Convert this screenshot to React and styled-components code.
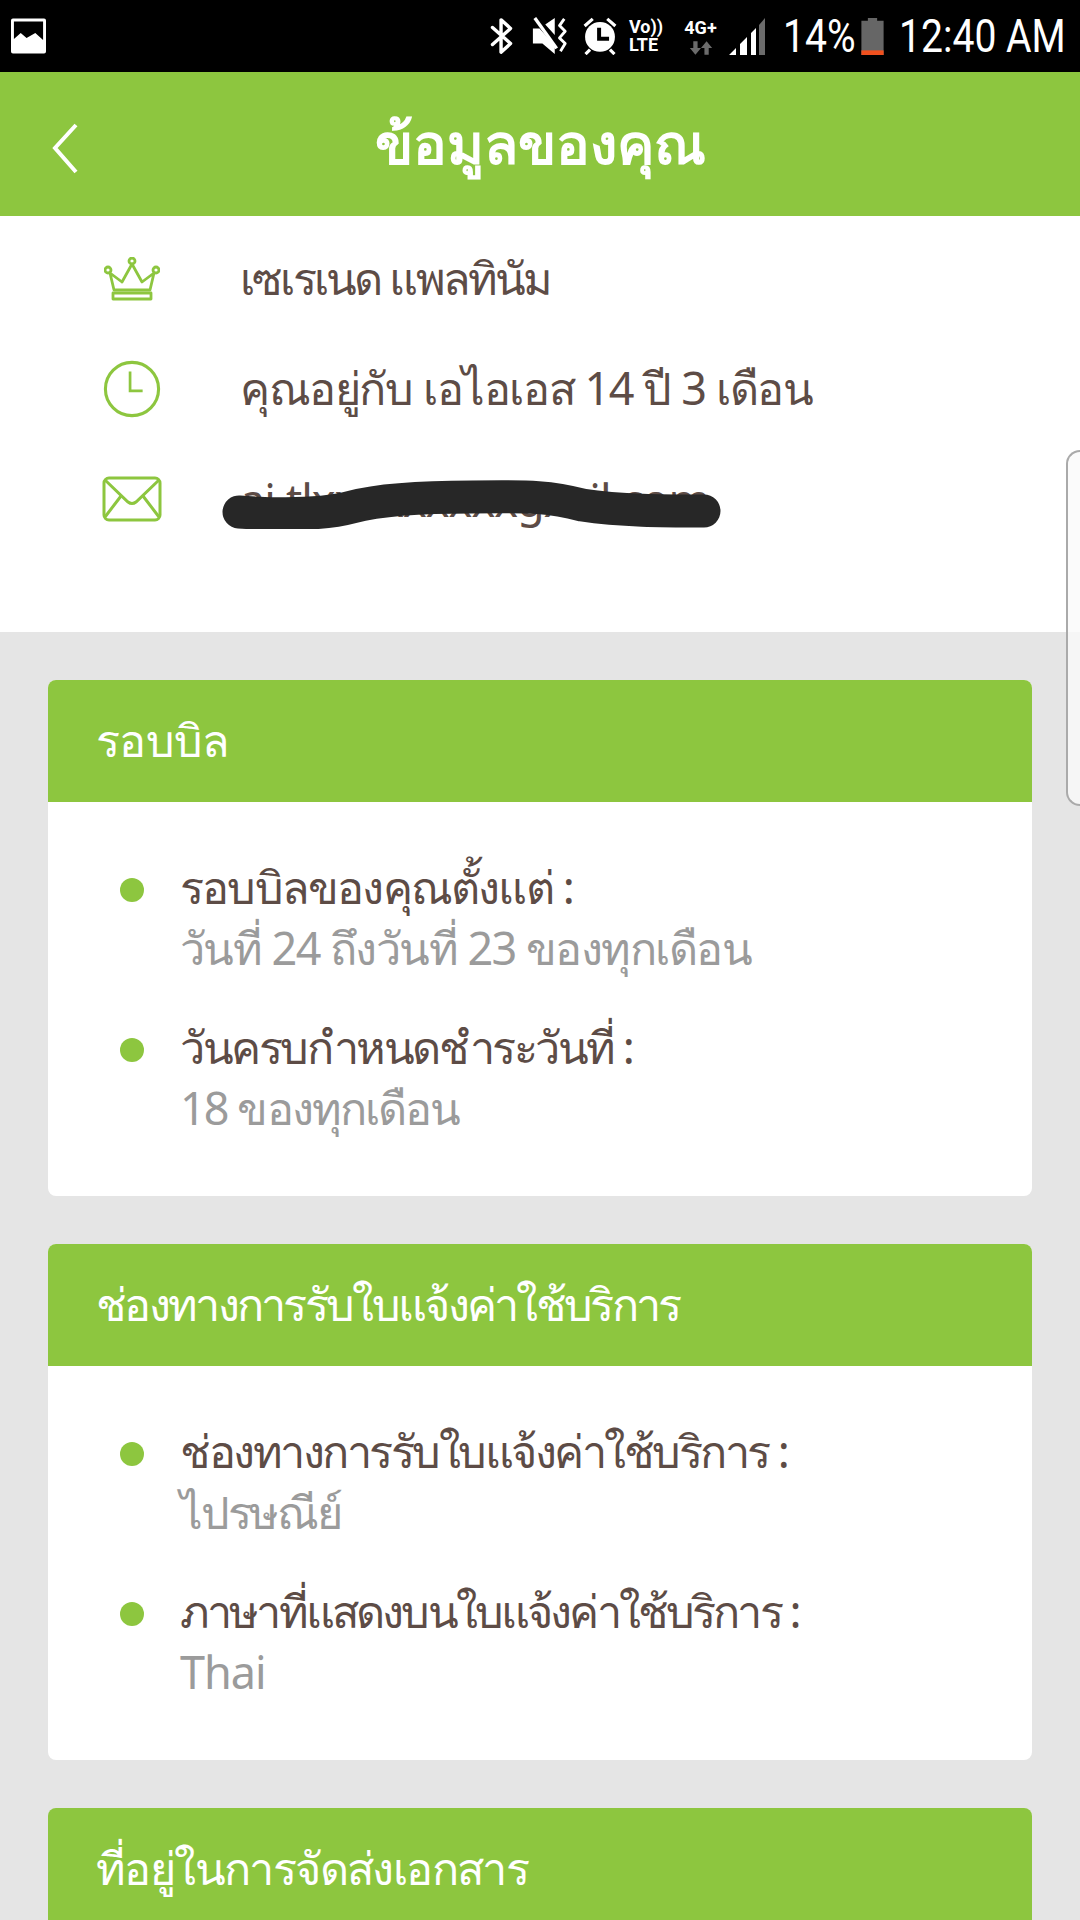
import React from "react";
import styled, { createGlobalStyle } from "styled-components";

const GREEN = "#8dc63f";
const BROWN = "#5d4c46";

// track = letter spacing per string, the font here is wider than the one in the app
const sections = [
  {
    title: "รอบบิล",
    track: -0.7,
    items: [
      { label: "รอบบิลของคุณตั้งแต่ :", labelTrack: -1.8, value: "วันที่ 24 ถึงวันที่ 23 ของทุกเดือน", valueTrack: -1.55 },
      { label: "วันครบกำหนดชำระวันที่ :", labelTrack: -2.5, value: "18 ของทุกเดือน", valueTrack: -1.9 },
    ],
  },
  {
    title: "ช่องทางการรับใบแจ้งค่าใช้บริการ",
    track: -2.7,
    items: [
      { label: "ช่องทางการรับใบแจ้งค่าใช้บริการ :", labelTrack: -2.5, value: "ไปรษณีย์", valueTrack: -2.2 },
      { label: "ภาษาที่แสดงบนใบแจ้งค่าใช้บริการ :", labelTrack: -2.85, value: "Thai", valueTrack: -1 },
    ],
  },
];

const App = () => {
  return (
    <Page>
      <GlobalStyle />
      <StatusBar>
        <GalleryIcon />
        <StatusRight>
          <StatusSlot>
            <BluetoothIcon />
          </StatusSlot>
          <StatusSlot $left={16}>
            <MuteIcon />
          </StatusSlot>
          <StatusSlot $left={13}>
            <AlarmIcon />
          </StatusSlot>
          <VolteIcon>
            <span>Vo))</span>
            <span>LTE</span>
          </VolteIcon>
          <NetworkIcon>
            <span>4G+</span>
            <ArrowsIcon />
          </NetworkIcon>
          <StatusSlot $left={10}>
            <SignalIcon />
          </StatusSlot>
          <StatusText $left={18} $width={68}>14%</StatusText>
          <StatusSlot $left={10}>
            <BatteryIcon />
          </StatusSlot>
          <StatusText $left={15} $width={164}>12:40 AM</StatusText>
        </StatusRight>
      </StatusBar>

      <Header>
        <BackButton>
          <svg width="30" height="56" viewBox="0 0 30 56" fill="none">
            <path d="M26 5 L5 28 L26 52" stroke="white" strokeWidth="4" />
          </svg>
        </BackButton>
        <Title>ข้อมูลของคุณ</Title>
      </Header>

      <Profile>
        <ProfileRow>
          <IconSlot>
            <CrownIcon />
          </IconSlot>
          <ProfileText $track={-2.8}>เซเรเนด แพลทินัม</ProfileText>
        </ProfileRow>
        <ProfileRow>
          <IconSlot>
            <ClockIcon />
          </IconSlot>
          <ProfileText $track={-1.4}>คุณอยู่กับ เอไอเอส 14 ปี 3 เดือน</ProfileText>
        </ProfileRow>
        <ProfileRow>
          <IconSlot>
            <MailIcon />
          </IconSlot>
          <EmailWrap>
            <ProfileText $track={-1}>ai.tlxxxxxxxxxgxxil.com</ProfileText>
            <Scribble />
          </EmailWrap>
        </ProfileRow>
      </Profile>

      <Content>
        {sections.map((section) => (
          <Card key={section.title}>
            <CardHeader $track={section.track}>{section.title}</CardHeader>
            <CardBody>
              {section.items.map((item) => (
                <Item key={item.label}>
                  <Dot />
                  <div>
                    <ItemLabel $track={item.labelTrack}>{item.label}</ItemLabel>
                    <ItemValue $track={item.valueTrack}>{item.value}</ItemValue>
                  </div>
                </Item>
              ))}
            </CardBody>
          </Card>
        ))}
        <Card>
          <CardHeader $track={-1.6}>ที่อยู่ในการจัดส่งเอกสาร</CardHeader>
        </Card>
      </Content>

      <EdgeHandle />
    </Page>
  );
};

const GalleryIcon = () => (
  <svg width="35" height="36" viewBox="0 0 36 36">
    <path
      fillRule="evenodd"
      fill="white"
      d="M2 0H34Q36 0 36 2V34Q36 36 34 36H2Q0 36 0 34V2Q0 0 2 0ZM3 3V21L10 15L16 20L25 15L33 22V3Z"
    />
  </svg>
);

const BluetoothIcon = () => (
  <svg width="26" height="38" viewBox="0 0 26 40" fill="none">
    <path d="M3 11 L22 28 L12 37 V3 L22 12 L3 29" stroke="white" strokeWidth="3.6" strokeLinejoin="round" strokeLinecap="round" />
  </svg>
);

const MuteIcon = () => (
  <svg width="38" height="38" viewBox="0 0 38 40" fill="none">
    <path d="M1 12H8L24 30V39L11 28H1Z M14 8L24 1V19Z" fill="white" />
    <path d="M3 1 L26 33" stroke="white" strokeWidth="3.5" />
    <path d="M34 2L29 9L35 15L29 22L35 28L30 36" stroke="white" strokeWidth="3" strokeLinejoin="round" />
  </svg>
);

const AlarmIcon = () => (
  <svg width="36" height="38" viewBox="0 0 38 42">
    <circle cx="19" cy="22" r="16.5" fill="white" />
    <path d="M2 10L11 2M36 10L27 2M8 36L3 41M30 36L35 41" stroke="white" strokeWidth="3.5" />
    <path d="M18 12V24H29" stroke="black" strokeWidth="4.4" fill="none" />
  </svg>
);

const ArrowsIcon = () => (
  <svg width="24" height="14" viewBox="0 0 28 16">
    <path d="M5 0H10V8H14L7.5 16L1 8H5Z M18 16H23V8H27L20.5 0L14 8H18Z" fill="#6b6b6b" />
  </svg>
);

const SignalIcon = () => (
  <svg width="36" height="38" viewBox="0 0 36 38">
    <path d="M0 38L7 31V38Z M11 38V27L18 20V38Z M22 38V16L27 11V38Z" fill="white" />
    <path d="M30 38V8L36 1V38Z" fill="#6b6b6b" />
  </svg>
);

const BatteryIcon = () => (
  <svg width="23" height="37" viewBox="0 0 24 40">
    <path d="M7 0H17V3H24V40H0V3H7Z" fill="#666" />
    <rect x="0" y="35" width="24" height="5" fill="#f0501e" />
  </svg>
);

const CrownIcon = () => (
  <svg width="56" height="44" viewBox="0 0 56 44" fill="none" stroke={GREEN} strokeWidth="2.8" strokeLinejoin="round">
    <circle cx="28" cy="4" r="3" />
    <circle cx="4" cy="13" r="3" />
    <circle cx="52" cy="13" r="3" />
    <path d="M28 7 L18 25 L6 16 L10 33 H46 L50 16 L38 25 Z" />
    <path d="M9 36 H47 V42 H9 Z" />
  </svg>
);

const ClockIcon = () => (
  <svg width="58" height="58" viewBox="0 0 60 60" fill="none" stroke={GREEN} strokeWidth="3.2">
    <circle cx="30" cy="30" r="27.5" />
    <path d="M28 12V32H41" strokeWidth="2.8" />
  </svg>
);

const MailIcon = () => (
  <svg width="60" height="46" viewBox="0 0 60 46" fill="none" stroke={GREEN} strokeWidth="3">
    <rect x="2" y="2" width="56" height="42" rx="5" />
    <path d="M3 4 L26 26 Q30 29 34 26 L57 4" />
    <path d="M3 41 L19 20 M57 41 L41 20" />
  </svg>
);

const Scribble = () => (
  <ScribbleSvg width="500" height="50" viewBox="0 0 500 50" fill="none">
    <path
      d="M17 33 C60 36 100 36 130 28 C160 20 200 18 250 18 C310 17 330 18 360 26 C400 32 440 32 482 32"
      stroke="#272727"
      strokeWidth="33"
      strokeLinecap="round"
    />
  </ScribbleSvg>
);

const GlobalStyle = createGlobalStyle`
  html, body {
    margin: 0;
    padding: 0;
    height: 1920px;
    overflow: hidden;
    background: #e5e5e5;
  }
  * {
    box-sizing: border-box;
  }
`;

const Page = styled.div`
  position: relative;
  width: 1080px;
  height: 1920px;
  overflow: hidden;
  background-color: #e5e5e5;
  font-family: "Noto Sans", "Open Sans", sans-serif;
`;

const StatusBar = styled.div`
  display: flex;
  justify-content: space-between;
  align-items: center;
  height: 72px;
  padding: 0 17px 0 11px;
  background-color: #000;
  color: white;
`;

const StatusRight = styled.div`
  display: flex;
  align-items: center;
`;

const StatusSlot = styled.div`
  display: flex;
  margin-left: ${(props) => props.$left || 0}px;
`;

const StatusText = styled.span`
  display: block;
  width: ${(props) => props.$width}px;
  margin-left: ${(props) => props.$left}px;
  font-family: "Roboto", sans-serif;
  font-size: 46px;
  font-weight: 400;
  line-height: 46px;
  white-space: nowrap;
  color: white;
  transform: scaleX(0.85);
  transform-origin: left center;
`;

const VolteIcon = styled.div`
  display: flex;
  flex-direction: column;
  width: 34px;
  margin-left: 11px;
  font-family: "Roboto", sans-serif;
  font-weight: 700;
  font-size: 18px;
  line-height: 18px;
  white-space: nowrap;
  color: white;
`;

const NetworkIcon = styled.div`
  display: flex;
  flex-direction: column;
  align-items: center;
  gap: 3px;
  width: 37px;
  margin-left: 19px;
  font-family: "Roboto", sans-serif;
  font-weight: 700;
  font-size: 18px;
  line-height: 20px;
  color: white;
`;

const Header = styled.div`
  position: relative;
  display: flex;
  align-items: center;
  justify-content: center;
  height: 144px;
  background-color: ${GREEN};
`;

const BackButton = styled.div`
  position: absolute;
  left: 50px;
  top: 48px;
  line-height: 0;
`;

const Title = styled.h1`
  margin: 0;
  font-size: 56px;
  font-weight: 700;
  color: white;
`;

const Profile = styled.div`
  height: 416px;
  padding-top: 8px;
  background-color: white;
`;

const ProfileRow = styled.div`
  display: flex;
  align-items: center;
  height: 110px;
  padding-left: 102px;
`;

const IconSlot = styled.div`
  display: flex;
  justify-content: center;
  width: 60px;
  margin-right: 78px;
`;

const ProfileText = styled.span`
  font-size: 45px;
  letter-spacing: ${(props) => props.$track}px;
  color: ${BROWN};
`;

const EmailWrap = styled.div`
  position: relative;
`;

const ScribbleSvg = styled.svg`
  position: absolute;
  left: -18px;
  top: 10px;
`;

const Content = styled.div`
  display: flex;
  flex-direction: column;
  gap: 48px;
  padding: 48px 48px 0;
`;

const Card = styled.div`
  border-radius: 8px;
  overflow: hidden;
  background-color: white;
`;

const CardHeader = styled.div`
  display: flex;
  align-items: center;
  height: 122px;
  padding-left: 48px;
  font-size: 45px;
  letter-spacing: ${(props) => props.$track}px;
  color: white;
  background-color: ${GREEN};
`;

const CardBody = styled.div`
  display: flex;
  flex-direction: column;
  gap: 38px;
  height: 394px;
  padding: 54px 0 0 72px;
`;

const Item = styled.div`
  display: flex;
  gap: 36px;
`;

const Dot = styled.div`
  flex: none;
  width: 24px;
  height: 24px;
  margin-top: 22px;
  border-radius: 50%;
  background-color: ${GREEN};
`;

const ItemLabel = styled.div`
  font-size: 45px;
  line-height: 61px;
  letter-spacing: ${(props) => props.$track}px;
  color: ${BROWN};
`;

const ItemValue = styled.div`
  font-size: 45px;
  line-height: 61px;
  letter-spacing: ${(props) => props.$track}px;
  color: #9b9b9b;
`;

const EdgeHandle = styled.div`
  position: absolute;
  top: 450px;
  right: 0;
  width: 14px;
  height: 356px;
  border: 2px solid #aaa;
  border-right: none;
  border-radius: 14px 0 0 14px;
  background-color: rgba(250, 250, 250, 0.8);
`;

export default App;
